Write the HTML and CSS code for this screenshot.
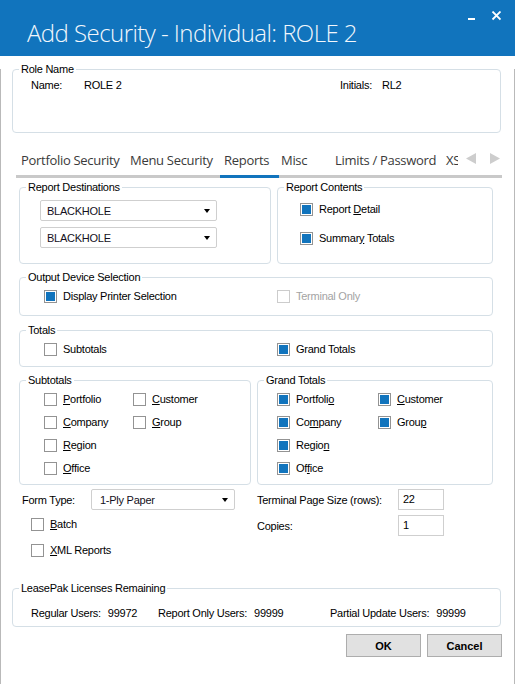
FILE: index.html
```html
<!DOCTYPE html>
<html lang="en">
<head>
    <meta charset="UTF-8">
    <title>Add Security - Individual: ROLE 2</title>
    <link rel="stylesheet" href="styles.css">
</head>
<body>
<div class="window">
    <!-- Title bar -->
    <div class="titlebar">
        <div class="title">Add Security - Individual: ROLE 2</div>
        <svg class="caption-btns" width="33" height="10" viewBox="0 0 33 10">
            <rect x="0" y="7" width="7" height="2" fill="#fff"/>
            <path d="M24.5 0.5 L32.5 8.5 M32.5 0.5 L24.5 8.5" stroke="#fff" stroke-width="1.8"/>
        </svg>
    </div>

    <div class="client">
        <!-- Role Name -->
        <div class="group role-group">
            <div class="group-title">Role Name</div>
            <div class="role-row">
                <span class="role-label">Name:</span>
                <span class="role-value">ROLE 2</span>
                <span class="init-label">Initials:</span>
                <span>RL2</span>
            </div>
        </div>

        <!-- Tabs -->
        <div class="tabs">
            <div class="tab-list">
                <div class="tab t1">Portfolio Security</div>
                <div class="tab t2">Menu Security</div>
                <div class="tab t3 active">Reports</div>
                <div class="tab t4">Misc</div>
                <div class="tab t5">Limits / Password</div>
                <div class="tab t6">XSL</div>
            </div>
            <div class="tab-arrows">
                <svg width="10" height="11" viewBox="0 0 10 11"><polygon points="0,5.5 10,0 10,11" fill="#cdcdcd"/></svg>
                <svg width="10" height="11" viewBox="0 0 10 11"><polygon points="10,5.5 0,0 0,11" fill="#cdcdcd"/></svg>
            </div>
        </div>

        <!-- Reports page -->
        <div class="page">
            <div class="pair top-pair">
                <div class="group dest">
                    <div class="group-title">Report Destinations</div>
                    <div class="combo dest-combo first"><span>BLACKHOLE</span><span class="arrow"></span></div>
                    <div class="combo dest-combo"><span>BLACKHOLE</span><span class="arrow"></span></div>
                </div>
                <div class="group contents">
                    <div class="group-title">Report Contents</div>
                    <div class="inner">
                        <div class="check-row first"><span class="box on"></span><span>Report <u>D</u>etail</span></div>
                        <div class="check-row second"><span class="box on"></span><span>Summar<u>y</u> Totals</span></div>
                    </div>
                </div>
            </div>

            <div class="group output">
                <div class="group-title">Output Device Selection</div>
                <div class="line">
                    <div class="check-row wide"><span class="box on"></span><span>Display Printer Selection</span></div>
                    <div class="check-row disabled"><span class="box"></span><span>Terminal Only</span></div>
                </div>
            </div>

            <div class="group totals">
                <div class="group-title">Totals</div>
                <div class="line">
                    <div class="check-row wide"><span class="box"></span><span>Subtotals</span></div>
                    <div class="check-row"><span class="box on"></span><span>Grand Totals</span></div>
                </div>
            </div>

            <div class="pair level-pair">
                <div class="group subtotals">
                    <div class="group-title">Subtotals</div>
                    <div class="cols">
                        <div class="col">
                            <div class="check-row"><span class="box"></span><span><u>P</u>ortfolio</span></div>
                            <div class="check-row"><span class="box"></span><span><u>C</u>ompany</span></div>
                            <div class="check-row"><span class="box"></span><span><u>R</u>egion</span></div>
                            <div class="check-row"><span class="box"></span><span><u>O</u>ffice</span></div>
                        </div>
                        <div class="col">
                            <div class="check-row"><span class="box"></span><span><u>C</u>ustomer</span></div>
                            <div class="check-row"><span class="box"></span><span><u>G</u>roup</span></div>
                        </div>
                    </div>
                </div>
                <div class="group grand">
                    <div class="group-title">Grand Totals</div>
                    <div class="cols">
                        <div class="col">
                            <div class="check-row"><span class="box on"></span><span>Portfoli<u>o</u></span></div>
                            <div class="check-row"><span class="box on"></span><span>Co<u>m</u>pany</span></div>
                            <div class="check-row"><span class="box on"></span><span>Regio<u>n</u></span></div>
                            <div class="check-row"><span class="box on"></span><span>Of<u>f</u>ice</span></div>
                        </div>
                        <div class="col">
                            <div class="check-row"><span class="box on"></span><span><u>C</u>ustomer</span></div>
                            <div class="check-row"><span class="box on"></span><span>Grou<u>p</u></span></div>
                        </div>
                    </div>
                </div>
            </div>

            <div class="form-area">
                <div class="form-left">
                    <div class="field">
                        <span class="form-label">Form Type:</span>
                        <div class="combo form-combo"><span>1-Ply Paper</span><span class="arrow"></span></div>
                    </div>
                    <div class="check-row batch"><span class="box"></span><span><u>B</u>atch</span></div>
                    <div class="check-row xml"><span class="box"></span><span><u>X</u>ML Reports</span></div>
                </div>
                <div class="form-right">
                    <div class="field">
                        <span class="term-label">Terminal Page Size (rows):</span>
                        <div class="textbox">22</div>
                    </div>
                    <div class="field copies">
                        <span class="term-label">Copies:</span>
                        <div class="textbox">1</div>
                    </div>
                </div>
            </div>
        </div>

        <!-- Licenses -->
        <div class="group licenses">
            <div class="group-title">LeasePak Licenses Remaining</div>
            <div class="lic-row">
                <span class="lic reg">Regular Users:<span class="num">99972</span></span>
                <span class="lic rep">Report Only Users:<span class="num">99999</span></span>
                <span class="lic">Partial Update Users:<span class="num">99999</span></span>
            </div>
        </div>

        <div class="buttons">
            <button class="btn">OK</button>
            <button class="btn">Cancel</button>
        </div>
    </div>
</div>
</body>
</html>
```

FILE: styles.css
```css
body {
    margin: 0;
    padding: 0;
    background: #ffffff;
    font-family: "Liberation Sans", Arial, sans-serif;
    font-size: 11px;
    letter-spacing: -0.25px;
    color: #000;
}

.window {
    width: 515px;
    height: 684px;
}

/* Title bar */
.titlebar {
    height: 56px;
    background-color: #1174bd;
    display: flex;
    align-items: flex-start;
}

.title {
    font-family: "Open Sans", sans-serif;
    font-weight: 300;
    font-size: 24px;
    line-height: 32px;
    letter-spacing: -0.55px;
    color: #f2f7fc;
    margin: 17px 0 0 27px;
    white-space: nowrap;
}

.caption-btns {
    margin: 11px 14px 0 auto;
}

.client {
    box-sizing: border-box;
    height: 628px;
    border: 1px solid #b9b9b9;
    border-top: none;
    padding-left: 11px;
}

/* Group boxes */
.group {
    box-sizing: border-box;
    border: 1px solid #d5dfe6;
    border-radius: 4px;
}

.group-title {
    display: table;
    margin: -7px 0 0 6px;
    padding: 0 2px;
    background: #fff;
    line-height: 13px;
}

.role-group {
    margin-top: 13px;
    width: 489px;
    height: 64px;
}

.role-row {
    display: flex;
    margin-top: 3px;
    padding-left: 18px;
    line-height: 13px;
}

.role-label { width: 53px; }
.role-value { width: 256px; }
.init-label { width: 42px; }

/* Tabs */
.tabs {
    display: flex;
    margin: 18px 0 0 4px;
    width: 486px;
    border-bottom: 3px solid #c9c9c9;
}

.tab-list {
    display: flex;
    width: 442px;
    overflow: hidden;
    margin-bottom: -3px;
}

.tab {
    flex-shrink: 0;
    box-sizing: border-box;
    padding: 0 0 6px 4px;
    border-bottom: 3px solid transparent;
    font-family: "Open Sans", sans-serif;
    font-size: 13px;
    line-height: 18px;
    letter-spacing: -0.3px;
    color: #3a3a3a;
    white-space: nowrap;
}

.tab.active { border-bottom-color: #1174bd; }
.t1 { width: 110px; padding-left: 5px; }
.t2 { width: 94px; }
.t3 { width: 59px; }
.t4 { width: 52px; padding-left: 2px; }
.t5 { width: 111px; }
.t6 { width: 40px; }

.tab-arrows {
    display: flex;
    gap: 14px;
    margin: 2px 0 0 8px;
    align-self: flex-start;
}

/* Page */
.page {
    margin-left: 7px;
}

.pair {
    display: flex;
    gap: 6px;
}

.top-pair { margin-top: 9px; }

.dest {
    width: 252px;
    height: 77px;
}

.contents {
    width: 216px;
    height: 77px;
}

.contents .inner { padding-left: 22px; }

.combo {
    box-sizing: border-box;
    display: flex;
    align-items: center;
    height: 21px;
    border: 1px solid #cfcfcf;
    border-radius: 2px;
    padding: 0 6px;
    color: #141021;
}

.combo .arrow {
    margin-left: auto;
    width: 0;
    height: 0;
    border-left: 3.5px solid transparent;
    border-right: 3.5px solid transparent;
    border-top: 4px solid #000;
}

.dest-combo {
    width: 177px;
    margin: 6px 0 0 20px;
}

/* Check boxes */
.check-row {
    display: flex;
    align-items: center;
    height: 15px;
    line-height: 13px;
    white-space: nowrap;
}

.box {
    box-sizing: border-box;
    width: 13px;
    height: 13px;
    border: 1px solid #939393;
    padding: 1px;
    margin-right: 6px;
    flex-shrink: 0;
    background: #fff;
}

.box.on::after {
    content: "";
    display: block;
    width: 9px;
    height: 9px;
    background: #1174bd;
}

.check-row.disabled { color: #a3a3a3; }
.check-row.disabled .box { border-color: #cccccc; }

.contents .first { margin-top: 8px; }
.contents .second { margin-top: 14px; }

.output {
    margin-top: 13px;
    width: 474px;
    height: 39px;
}

.totals {
    margin-top: 14px;
    width: 474px;
    height: 37px;
}

.line {
    display: flex;
    margin-top: 5px;
    padding-left: 24px;
}

.check-row.wide { width: 233px; }

.level-pair { margin-top: 13px; }

.subtotals {
    width: 232px;
    height: 105px;
}

.grand {
    width: 236px;
    height: 105px;
}

.cols {
    display: flex;
    margin-top: 5px;
}

.subtotals .cols { padding-left: 24px; }
.grand .cols { padding-left: 19px; }

.col {
    display: flex;
    flex-direction: column;
    gap: 8px;
}

.subtotals .col:first-child { width: 89px; }
.grand .col:first-child { width: 101px; }

/* Form type area */
.form-area {
    display: flex;
    margin-top: 4px;
}

.form-left { width: 238px; }

.field {
    display: flex;
    align-items: center;
}

.form-label {
    width: 69px;
    padding-left: 3px;
}

.form-combo {
    width: 144px;
    padding-left: 8px;
}

.batch {
    margin-top: 7px;
    padding-left: 12px;
}

.xml {
    margin-top: 11px;
    padding-left: 12px;
}

.term-label { width: 141px; }

.textbox {
    box-sizing: border-box;
    width: 46px;
    height: 21px;
    border: 1px solid #cfcfcf;
    padding-left: 4px;
    line-height: 19px;
}

.copies { margin-top: 5px; }

/* Licenses */
.licenses {
    margin-top: 30px;
    width: 489px;
    height: 39px;
}

.lic-row {
    display: flex;
    margin-top: 12px;
    padding-left: 18px;
    line-height: 13px;
}

.lic .num { margin-left: 7px; }
.lic.reg { width: 127px; }
.lic.rep { width: 172px; }

/* Buttons */
.buttons {
    display: flex;
    justify-content: flex-end;
    gap: 6px;
    width: 490px;
    margin-top: 7px;
}

.btn {
    width: 75px;
    height: 23px;
    background: #e1e1e1;
    border: 1px solid #adadad;
    font-family: "Liberation Sans", Arial, sans-serif;
    font-size: 11px;
    font-weight: bold;
    color: #000;
    padding: 0;
}
```
